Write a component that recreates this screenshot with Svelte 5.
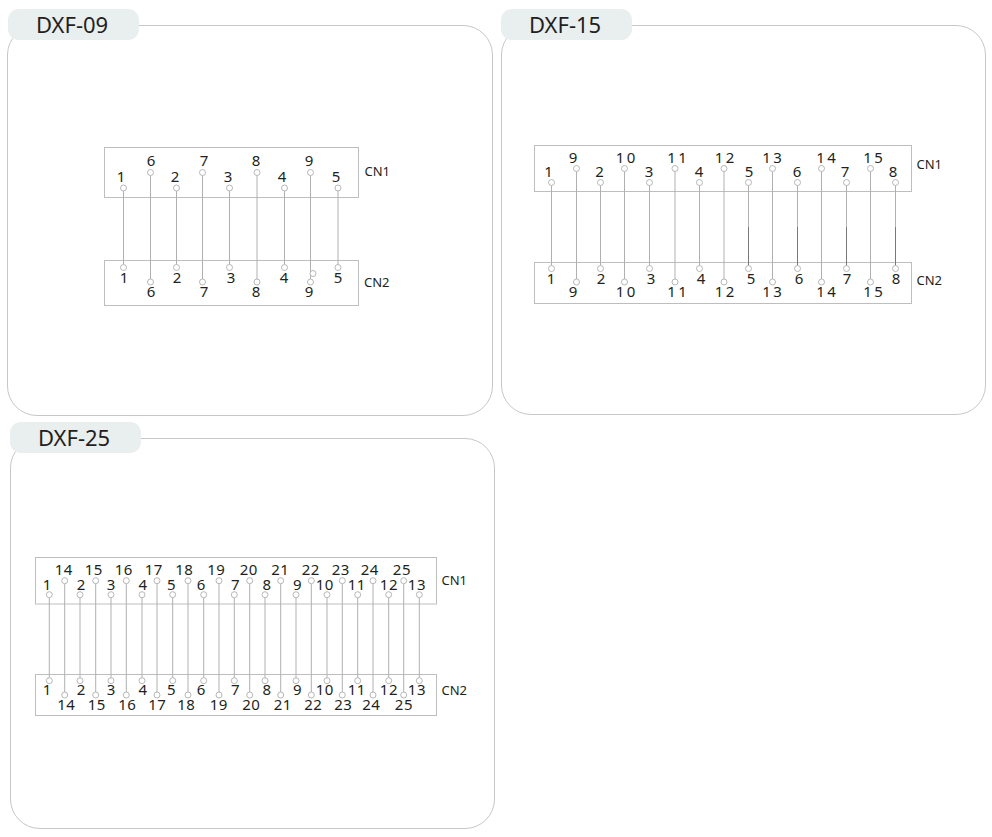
<script>
  // pin: [label, wire x, label x on CN1, label x on CN2]; every second pin sits on the high row
  const dxf09 = {
    title: "DXF-09",
    view: "7 25 486 391",
    spacing: 0,
    cn1: { x: 104.5, y: 147.5, w: 254, h: 50, low: 188, high: 172.5, baseLow: 182, baseHigh: 166, labelX: 364.5, labelY: 176 },
    cn2: { x: 104.5, y: 260.5, w: 254, h: 45, low: 267.5, high: 282, baseLow: 283, baseHigh: 297, labelX: 364, labelY: 287 },
    pins: [
      ["1", 123.5, 121, 124],
      ["6", 150.5, 151, 151],
      ["2", 176.5, 175, 177],
      ["7", 202.5, 204, 204],
      ["3", 229.5, 228, 231],
      ["8", 257, 256, 256],
      ["4", 284.5, 282, 284],
      ["9", 310.5, 309, 309],
      ["5", 338, 336, 338]
    ],
    extras: [[313, 273.5]],
    dark: []
  };

  const dxf15 = {
    title: "DXF-15",
    view: "501 25 485 390",
    spacing: 2.5,
    cn1: { x: 534.5, y: 145.5, w: 377, h: 46, low: 182.5, high: 168.5, baseLow: 176.5, baseHigh: 163, labelX: 916.5, labelY: 169 },
    cn2: { x: 534.5, y: 262.5, w: 377, h: 41, low: 268.5, high: 282, baseLow: 283.5, baseHigh: 296.5, labelX: 916.5, labelY: 285 },
    pins: [
      ["1", 551.5, 548.5, 551],
      ["9", 576.5, 573, 573],
      ["2", 600.5, 599.5, 601],
      ["10", 624.5, 625.5, 625.5],
      ["3", 649.5, 649, 651],
      ["11", 675, 677, 677],
      ["4", 699.5, 699, 701],
      ["12", 724, 724.5, 724.5],
      ["5", 748.5, 749, 751],
      ["13", 772.5, 772, 772],
      ["6", 797.5, 797, 799],
      ["14", 821.5, 826, 826],
      ["7", 846.5, 845, 847],
      ["15", 870.5, 873, 873],
      ["8", 895.5, 893, 896]
    ],
    extras: [],
    dark: ["5", "6", "7", "8"]
  };

  const dxf25 = {
    title: "DXF-25",
    view: "10 438 485 391",
    spacing: 0.5,
    cn1: { x: 35.5, y: 557.5, w: 401, h: 46.5, low: 594.7, high: 580.7, baseLow: 589.5, baseHigh: 574.5, labelX: 441.5, labelY: 584.5 },
    cn2: { x: 35.5, y: 674.5, w: 401, h: 41, low: 680.7, high: 695, baseLow: 695, baseHigh: 710, labelX: 441.5, labelY: 695 },
    pins: [
      ["1", 49.3, 47, 47],
      ["14", 64.7, 63.5, 66],
      ["2", 80, 81, 81],
      ["15", 95.7, 93.5, 96.5],
      ["3", 111, 111, 111],
      ["16", 126.3, 123.5, 127],
      ["4", 142, 142.7, 142.7],
      ["17", 157, 153.5, 157],
      ["5", 172.7, 171.3, 171.3],
      ["18", 188, 184, 186],
      ["6", 203.7, 201, 201],
      ["19", 219, 216, 218.5],
      ["7", 234.3, 235.3, 235.3],
      ["20", 249.7, 248.5, 251],
      ["8", 265, 266.7, 266.7],
      ["21", 280.7, 280, 282.5],
      ["9", 296, 297.3, 297.3],
      ["22", 311.3, 310.5, 313],
      ["10", 327, 324.5, 324.5],
      ["23", 342.3, 340.5, 343],
      ["11", 357.7, 356.5, 356.5],
      ["24", 373, 369.5, 371],
      ["12", 388.7, 388.7, 388.7],
      ["25", 403.7, 401.7, 403.7],
      ["13", 419.3, 416.7, 416.7]
    ],
    extras: [],
    dark: []
  };

  const panels = [dxf09, dxf15, dxf25];
</script>

<div class="sheet">
  {#each panels as panel, p}
    <section class="panel p{p}">
      <h2 class="tab">{panel.title}</h2>
      <div class="frame">
        <svg viewBox={panel.view} aria-label={panel.title}>
          <rect class="box" x={panel.cn1.x} y={panel.cn1.y} width={panel.cn1.w} height={panel.cn1.h} />
          <rect class="box" x={panel.cn2.x} y={panel.cn2.y} width={panel.cn2.w} height={panel.cn2.h} />

          {#each panel.pins as [label, x, topX, botX], i}
            {@const odd = i % 2 === 1}
            {@const y1 = odd ? panel.cn1.high : panel.cn1.low}
            {@const y2 = odd ? panel.cn2.high : panel.cn2.low}
            {@const nudge = panel.spacing / 2}
            <line class="wire" x1={x} y1={y1 + 3} x2={x} y2={y2 - 3} />
            {#if panel.dark.includes(label)}
              <line class="wire dark" x1={x} y1="227" x2={x} y2={y2 - 3} />
            {/if}
            <circle class="pin" cx={x} cy={y1} r="3" />
            <circle class="pin" cx={x} cy={y2} r="3" />
            <text class="num" x={topX + nudge} y={odd ? panel.cn1.baseHigh : panel.cn1.baseLow} style:letter-spacing="{panel.spacing}px">{label}</text>
            <text class="num" x={botX + nudge} y={odd ? panel.cn2.baseHigh : panel.cn2.baseLow} style:letter-spacing="{panel.spacing}px">{label}</text>
          {/each}

          {#each panel.extras as [cx, cy]}
            <circle class="pin" {cx} {cy} r="3" />
          {/each}

          <text class="cn" x={panel.cn1.labelX} y={panel.cn1.labelY}>CN1</text>
          <text class="cn" x={panel.cn2.labelX} y={panel.cn2.labelY}>CN2</text>
        </svg>
      </div>
    </section>
  {/each}
</div>

<style>
  :global(body) {
    background: #fff;
    font-family: "Noto Sans", "Open Sans", sans-serif;
  }
  .sheet {
    display: grid;
    grid-template-columns: 494px 485px;
    align-content: start;
    row-gap: 6px;
    width: 992px;
    height: 837px;
    box-sizing: border-box;
    padding: 9px 0 0 7px;
  }
  .panel {
    position: relative;
    padding-top: 16px;
  }
  .p0 {
    width: 486px;
  }
  .p2 {
    margin-left: 3px;
    width: 485px;
  }
  .frame {
    box-sizing: border-box;
    height: 391px;
    border: 1px solid #c6c8c8;
    border-radius: 30px;
    background: #fff;
  }
  .p1 .frame {
    height: 390px;
  }
  .frame svg {
    display: block;
    position: absolute;
    top: 16px;
    left: 0;
    width: 100%;
    height: 391px;
  }
  .p1 .frame svg {
    height: 390px;
  }
  .tab {
    position: absolute;
    z-index: 1;
    top: 0;
    left: 1px;
    width: 131px;
    height: 31px;
    margin: 0;
    box-sizing: border-box;
    padding-left: 28px;
    border-radius: 11px;
    background: #e9eeef;
    color: #231f20;
    font-size: 22px;
    font-weight: 400;
    line-height: 31px;
  }
  .p1 .tab,
  .p2 .tab {
    left: 0;
  }
  .box {
    fill: none;
    stroke: #bdbfbf;
    stroke-width: 1;
  }
  .wire {
    stroke: #afb1b1;
    stroke-width: 1;
  }
  .wire.dark {
    stroke: #77797a;
  }
  .pin {
    fill: #fff;
    stroke: #a3a5a5;
    stroke-width: 0.8;
  }
  .num {
    fill: #231f20;
    font-size: 15px;
    text-anchor: middle;
  }
  .cn {
    fill: #231f20;
    font-size: 13px;
  }
</style>
